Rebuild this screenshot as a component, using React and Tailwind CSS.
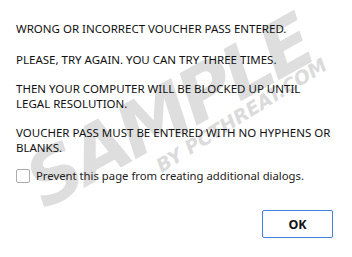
import React from 'react'

const Watermark = () => (
  <div className="pointer-events-none absolute inset-0 overflow-hidden">
    <div
      className="absolute left-[32px] top-[150px] origin-left -rotate-[29deg] whitespace-nowrap text-[74px] font-black italic leading-none tracking-[-4px] text-[#c4c4c4] opacity-55"
      style={{ fontFamily: '"DejaVu Sans", sans-serif' }}
    >
      SAMPLE
    </div>
    <div
      className="absolute left-[158px] top-[158px] origin-left -rotate-[32deg] whitespace-nowrap text-[19px] font-black italic leading-none text-[#c4c4c4] opacity-60"
      style={{ fontFamily: '"DejaVu Sans", sans-serif' }}
    >
      BY PCTHREAT.COM
    </div>
  </div>
)

export default function App() {
  return (
    <div className="relative h-[257px] w-[352px] overflow-hidden bg-white font-['Noto_Sans',sans-serif] text-[11.5px] leading-[15px] text-[#111]">
      <Watermark />
      <div className="relative flex flex-col px-4 pt-[21px]">
        <p className="mb-4 whitespace-nowrap">WRONG OR INCORRECT VOUCHER PASS ENTERED.</p>
        <p className="mb-[14px] whitespace-nowrap">PLEASE, TRY AGAIN. YOU CAN TRY THREE TIMES.</p>
        <p className="mb-[14px] whitespace-nowrap">
          THEN YOUR COMPUTER WILL BE BLOCKED UP UNTIL
          <br />
          LEGAL RESOLUTION.
        </p>
        <p className="whitespace-nowrap">
          VOUCHER PASS MUST BE ENTERED WITH NO HYPHENS OR
          <br />
          BLANKS.
        </p>
        <label className="mt-[13px] flex items-center gap-[6px] text-[#222]">
          <span className="h-[14px] w-[14px] shrink-0 rounded-[2px] border border-[#acacac] bg-white" />
          <span className="whitespace-nowrap text-[11.3px]">Prevent this page from creating additional dialogs.</span>
        </label>
        <div className="mt-[27px] flex justify-end pr-[3px]">
          <button className="flex h-[28px] w-[71px] items-center justify-center rounded-[2px] border border-[#3f80e0] bg-white text-[12.5px] font-bold text-[#111]">
            OK
          </button>
        </div>
      </div>
    </div>
  )
}
